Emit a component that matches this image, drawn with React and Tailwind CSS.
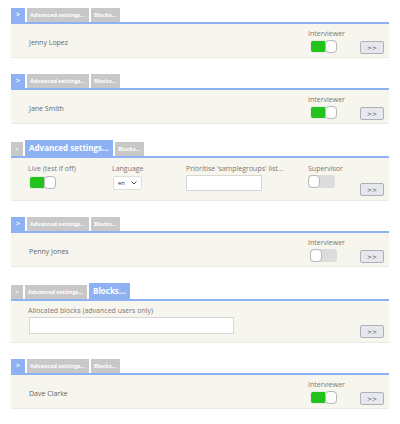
import React from "react";

const font = { fontFamily: '"Open Sans", "Liberation Sans", sans-serif' };

function Toggle({ on }) {
  if (on) {
    return (
      <div className="flex h-[13px] w-[27px] items-center rounded-[3px] bg-[#e9e9e9]">
        <div className="h-[11px] w-[14px] rounded-l-[2px] bg-[#22c41c] ml-[1px]" />
        <div className="h-[13px] w-[12px] rounded-[4px] border border-[#b9b9b9] bg-white" />
      </div>
    );
  }
  return (
    <div className="flex h-[13px] w-[27px] items-center rounded-[3px] bg-[#dcdcdc]">
      <div className="h-[13px] w-[12px] rounded-[4px] border border-[#b9b9b9] bg-white" />
    </div>
  );
}

function Btn() {
  return (
    <div
      style={{ fontFamily: '"DejaVu Sans", sans-serif' }}
      className="flex h-[13px] w-[24px] items-center justify-center rounded-[2px] border border-[#aeb0b8] bg-[#e7e8ee] text-[6px] leading-none text-[#444]"
    >
      &gt;&gt;
    </div>
  );
}

function Tabs({ active }) {
  const small = "flex h-[14px] items-center px-[3px] text-[5.5px] font-bold text-white";
  const big = "flex h-[16px] items-center px-[4px] text-[8px] font-bold text-white bg-[#8db1f3]";
  return (
    <div className="flex items-end gap-[2px]">
      {active === 0 ? (
        <div className={`${small} w-[14px] justify-center bg-[#8db1f3] text-[7px]`}>&gt;</div>
      ) : (
        <div className={`${small} w-[12px] justify-center bg-[#c8c8c8]`}>&gt;</div>
      )}
      {active === 1 ? (
        <div className={big}>Advanced settings...</div>
      ) : (
        <div className={`${small} bg-[#c8c8c8] w-[62px]`}>Advanced settings...</div>
      )}
      {active === 2 ? (
        <div className={big}>Blocks...</div>
      ) : (
        <div className={`${small} bg-[#c8c8c8] w-[29px]`}>Blocks...</div>
      )}
    </div>
  );
}

function Panel({ children, h }) {
  return (
    <div className={`border-t-2 border-[#8db1f3] bg-[#f7f6ee] border-b border-b-[#ecebe3] ${h}`}>
      {children}
    </div>
  );
}

function PersonBlock({ name, on }) {
  return (
    <div>
      <Tabs active={0} />
      <Panel h="h-[36px]">
        <div className="flex h-full pl-[18px] pr-[5px]">
          <div className="flex-1 pt-[14px] text-[7px] text-[#666]">{name}</div>
          <div className="flex w-[52px] flex-col pt-[6px]">
            <div className="text-[7px] leading-[8px] text-[#777]">Interviewer</div>
            <div className="mt-[2px] ml-[2px]">
              <Toggle on={on} />
            </div>
          </div>
          <div className="pt-[17px]">
            <Btn />
          </div>
        </div>
      </Panel>
    </div>
  );
}

function AdvancedBlock() {
  return (
    <div>
      <Tabs active={1} />
      <Panel h="h-[45px]">
        <div className="flex h-full pl-[17px] pr-[5px] text-[7px] text-[#777]">
          <div className="w-[84px] pt-[7px]">
            <div className="leading-[8px]">Live (test if off)</div>
            <div className="mt-[3px] ml-[1px]">
              <Toggle on />
            </div>
          </div>
          <div className="w-[74px] pt-[7px]">
            <div className="leading-[8px]">Language</div>
            <div className="mt-[3px] ml-[1px] flex h-[14px] w-[29px] items-center justify-between rounded-[2px] border border-[#dedede] bg-white px-[4px] text-[6px] text-[#333]">
              <span>en</span>
              <svg width="6" height="4" viewBox="0 0 6 4">
                <path d="M0.5 0.5 L3 3 L5.5 0.5" stroke="#555" strokeWidth="1" fill="none" />
              </svg>
            </div>
          </div>
          <div className="w-[122px] pt-[7px]">
            <div className="leading-[8px]">Prioritise 'samplegroups' list...</div>
            <div className="mt-[2px] h-[16px] w-[76px] border border-[#d6d6d6] bg-white" />
          </div>
          <div className="w-[52px] pt-[7px]">
            <div className="leading-[8px]">Supervisor</div>
            <div className="mt-[2px]">
              <Toggle on={false} />
            </div>
          </div>
          <div className="pt-[25px]">
            <Btn />
          </div>
        </div>
      </Panel>
    </div>
  );
}

function BlocksBlock() {
  return (
    <div>
      <Tabs active={2} />
      <Panel h="h-[44px]">
        <div className="flex h-full pl-[17px] pr-[5px] text-[7px] text-[#777]">
          <div className="flex-1 pt-[6px]">
            <div className="leading-[8px]">Allocated blocks (advanced users only)</div>
            <div className="mt-[2px] ml-[1px] h-[17px] w-[205px] border border-[#d6d6d6] bg-white" />
          </div>
          <div className="pt-[24px]">
            <Btn />
          </div>
        </div>
      </Panel>
    </div>
  );
}

export default function App() {
  return (
    <div style={font} className="h-[424px] w-[400px] bg-white">
      <div className="flex w-[389px] flex-col gap-[16px] pl-[11px] pt-[8px]">
        <PersonBlock name="Jenny Lopez" on />
        <PersonBlock name="Jane Smith" on />
        <AdvancedBlock />
        <PersonBlock name="Penny Jones" on={false} />
        <BlocksBlock />
        <PersonBlock name="Dave Clarke" on />
      </div>
    </div>
  );
}
